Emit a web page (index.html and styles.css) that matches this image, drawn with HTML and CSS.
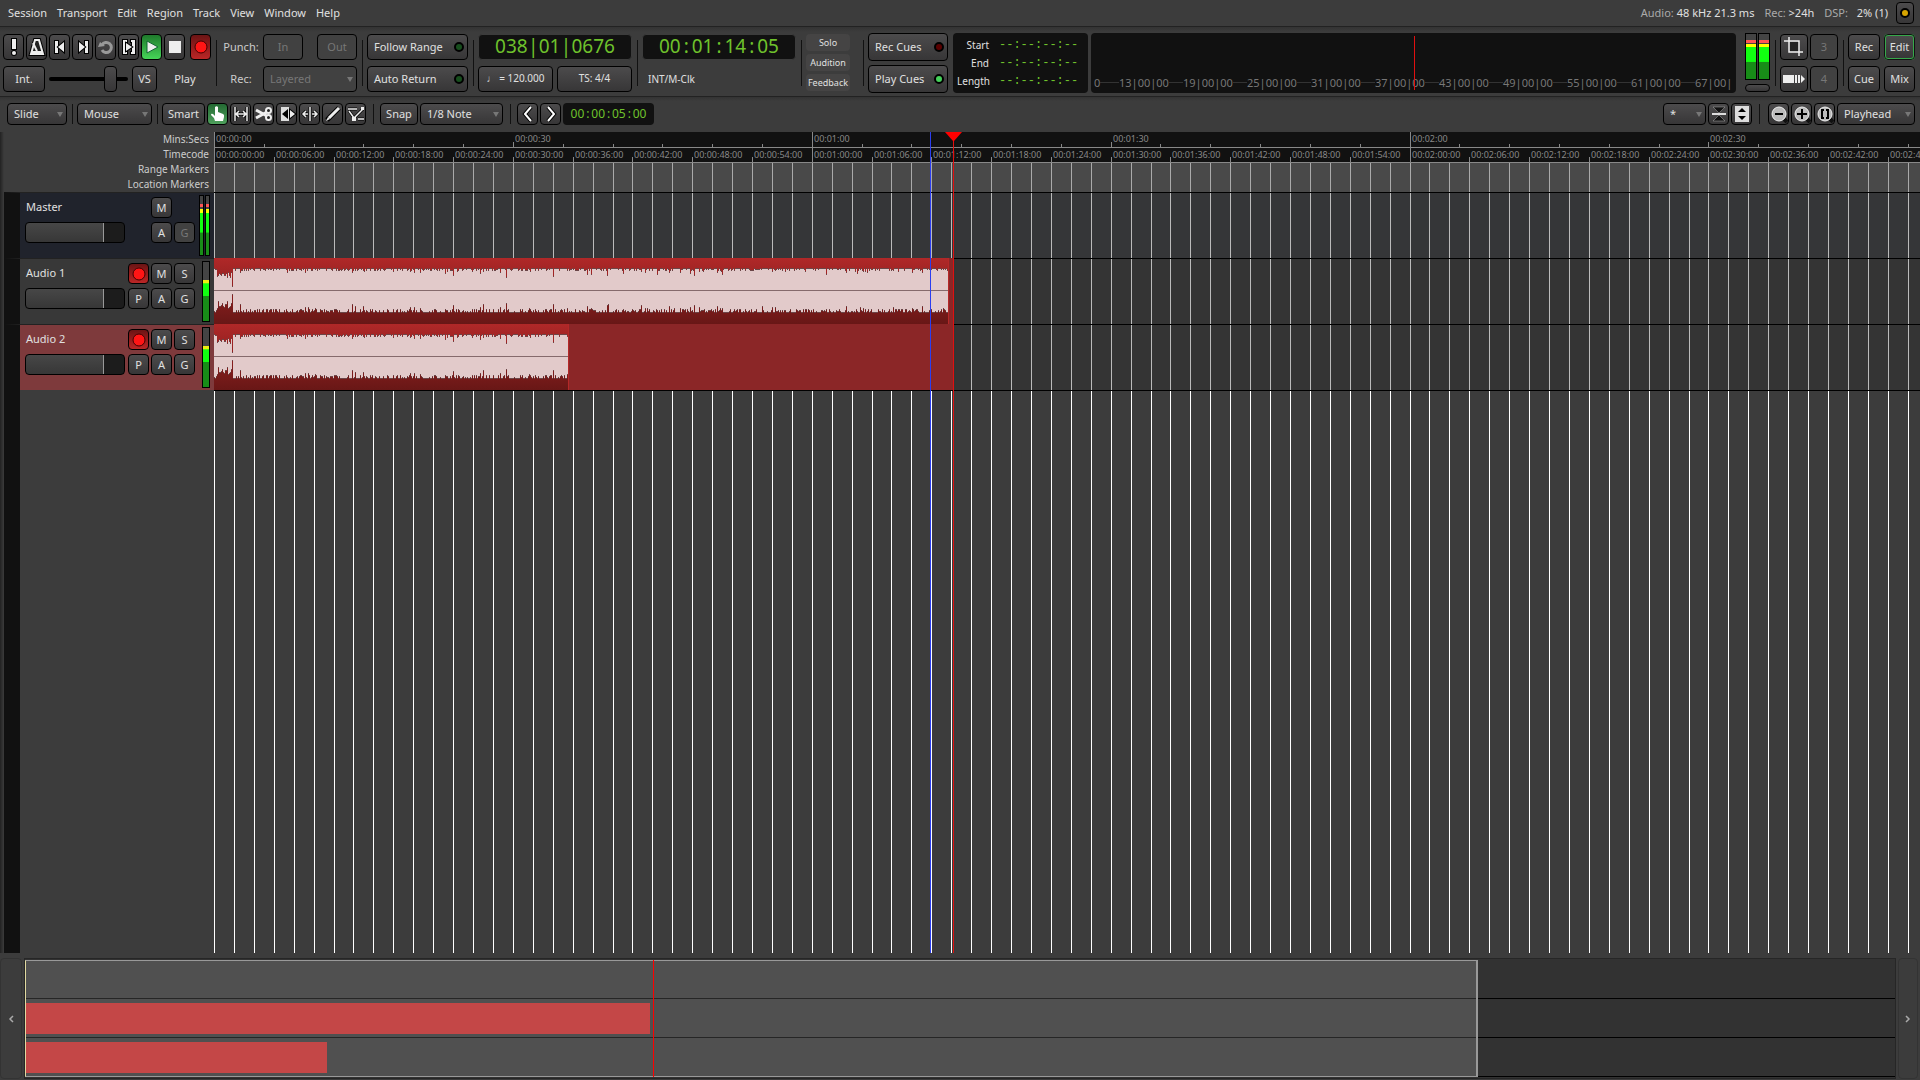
FILE: index.html
```html
<!DOCTYPE html>
<html lang="en">
<head>
    <meta charset="UTF-8">
    <meta name="viewport" content="width=device-width, initial-scale=1.0">
    <title>Session Editor</title>
    <link rel="stylesheet" href="styles.css">
</head>
<body>
    <header class="menubar">
        <nav class="menus">
            <button>Session</button>
            <button>Transport</button>
            <button>Edit</button>
            <button>Region</button>
            <button>Track</button>
            <button>View</button>
            <button>Window</button>
            <button>Help</button>
        </nav>
        <div class="status">
            <span><i>Audio:</i> 48 kHz 21.3 ms</span>
            <span><i>Rec:</i> &gt;24h</span>
            <span class="dsp"><i>DSP:</i> <b>2% (1)</b></span>
            <button class="btn led-btn" aria-label="Feedback state"><span class="led amber"></span></button>
        </div>
    </header>

    <section class="transport">
        <div class="stack">
            <div class="row">
                <button class="btn icon" aria-label="Panic"><svg viewBox="0 0 18 18"><path class="o" d="M7 1h4v10H7z"/><circle class="o" cx="9" cy="15" r="2"/></svg></button>
                <button class="btn icon" aria-label="Metronome"><svg viewBox="0 0 18 18"><path d="M7 2h4l4 14H3z" fill="none" stroke="#000" stroke-width="4"/><path d="M7 2h4l4 14H3z" fill="#222" stroke="#eee" stroke-width="2"/><path d="M4 13h10v3H4z" fill="#eee"/><path d="M9 13L5 5" stroke="#eee" stroke-width="2"/></svg></button>
                <button class="btn icon" aria-label="Go to start"><svg viewBox="0 0 18 18"><path class="o" d="M4 3h3v12H4z"/><path class="o" d="M13 4v10L7 9z"/></svg></button>
                <button class="btn icon" aria-label="Go to end"><svg viewBox="0 0 18 18"><path class="o" d="M11 3h3v12h-3z"/><path class="o" d="M5 4v10l6-5z"/></svg></button>
                <button class="btn icon" aria-label="Loop"><svg viewBox="0 0 18 18"><path d="M5 7a5 5 0 1 1 0 5" fill="none" stroke="#999" stroke-width="3"/><path d="M1 9l2-5 5 4z" fill="#999"/></svg></button>
                <button class="btn icon" aria-label="Play range"><svg viewBox="0 0 18 18"><path class="o" d="M3 2h4v2H6v10h1v2H3zM15 2h-4v2h1v10h-1v2h4z"/><path class="o" d="M6 5v8l6-4z"/></svg></button>
                <button class="btn icon play" aria-label="Play"><svg viewBox="0 0 18 18"><path d="M4 3v12l11-6z" fill="#eee" stroke="#163" /></svg></button>
                <button class="btn icon" aria-label="Stop"><svg viewBox="0 0 18 18"><path d="M3 3h12v12H3z" fill="#eee"/></svg></button>
                <button class="btn icon rec" aria-label="Record"><svg viewBox="0 0 18 18"><circle cx="9" cy="9" r="6" fill="#ff1515" stroke="#400"/></svg></button>
            </div>
            <div class="row">
                <button class="btn w42">Int.</button>
                <input class="shuttle" type="range" min="0" max="100" value="84" aria-label="Shuttle speed">
                <button class="btn w25">VS</button>
                <span class="state">Play</span>
            </div>
        </div>
        <span class="sep"></span>
        <div class="stack punch">
            <div class="row">
                <span class="caption">Punch:</span>
                <button class="btn off w40" disabled>In</button>
                <button class="btn off w40 right" disabled>Out</button>
            </div>
            <div class="row">
                <label class="caption" for="recmode">Rec:</label>
                <span class="drop off"><select id="recmode" disabled><option>Layered</option></select></span>
            </div>
        </div>
        <span class="sep"></span>
        <div class="stack w101">
            <button class="btn wide">Follow Range<span class="led"></span></button>
            <button class="btn wide">Auto Return<span class="led"></span></button>
        </div>
        <span class="sep"></span>
        <div class="stack w154">
            <div class="clock big">038<s>|</s>01<s>|</s>0676</div>
            <div class="row pair">
                <button class="btn small">♩ = 120.000</button>
                <button class="btn small">TS: 4/4</button>
            </div>
        </div>
        <span class="sep"></span>
        <div class="stack w154">
            <div class="clock big">00<s>:</s>01<s>:</s>14<s>:</s>05</div>
            <div class="sync">INT/M-Clk</div>
        </div>
        <span class="sep"></span>
        <div class="alerts">
            <button>Solo</button>
            <button>Audition</button>
            <button>Feedback</button>
        </div>
        <span class="sep"></span>
        <div class="stack cues">
            <button class="btn wide">Rec Cues<span class="led red"></span></button>
            <button class="btn wide">Play Cues<span class="led on"></span></button>
        </div>
        <dl class="selection">
            <dt>Start</dt><dd>--:--:--:--</dd>
            <dt>End</dt><dd>--:--:--:--</dd>
            <dt>Length</dt><dd>--:--:--:--</dd>
        </dl>
        <div class="mini-timeline">
            <div class="mini-labels">
                <span>0</span><span>13|00|00</span><span>19|00|00</span><span>25|00|00</span><span>31|00|00</span><span>37|00|00</span><span>43|00|00</span><span>49|00|00</span><span>55|00|00</span><span>61|00|00</span><span>67|00|</span>
            </div>
            <div class="mini-head"></div>
        </div>
        <div class="out-meter">
            <div class="meter hot"></div>
            <div class="meter hot"></div>
            <button class="btn peak" aria-label="Reset peak"></button>
        </div>
        <span class="sep"></span>
        <div class="scripts">
            <button class="btn" aria-label="Crop"><svg viewBox="0 0 20 20"><path d="M6 5h9v9H6z" fill="#222"/><path d="M5 0v15h14M0 4h15v15" fill="none" stroke="#eee" stroke-width="1.500"/></svg></button>
            <button class="btn off" disabled>3</button>
            <button class="btn" aria-label="Step"><svg viewBox="0 0 22 20"><path d="M0 6h11v8H0zM12 6h2v8h-2zM15 6h2v8h-2zM18 6l4 4-4 4z" fill="#eee"/></svg></button>
            <button class="btn off" disabled>4</button>
        </div>
        <span class="sep"></span>
        <div class="tabs">
            <button class="btn">Rec</button>
            <button class="btn current">Edit</button>
            <button class="btn">Cue</button>
            <button class="btn">Mix</button>
        </div>
    </section>

    <section class="tools">
        <span class="drop w60"><select aria-label="Edit mode"><option>Slide</option></select></span>
        <span class="sep"></span>
        <span class="drop w75"><select aria-label="Edit point"><option>Mouse</option></select></span>
        <span class="sep"></span>
        <div class="row">
            <button class="btn w43">Smart</button>
            <button class="btn icon grab" aria-label="Grab"><svg viewBox="0 0 18 18"><path d="M6 2q1.500-1.500 3 0v5l5 2q1.500.5 1 3l-1 4H6l-1-3-3-3q0-2 2-1l2 2z" fill="#fff"/></svg></button>
            <button class="btn icon" aria-label="Range"><svg viewBox="0 0 18 18"><path d="M3 2v14M15 2v14M4 9h10M7 6L4 9l3 3M11 6l3 3-3 3" fill="none" stroke="#000" stroke-width="3"/><path d="M3 2v14M15 2v14M4 9h10M7 6L4 9l3 3M11 6l3 3-3 3" fill="none" stroke="#eee" stroke-width="1.500"/></svg></button>
            <button class="btn icon" aria-label="Cut"><svg viewBox="0 0 18 18"><path d="M1 5l11 6M1 13l11-6" stroke="#eee" stroke-width="3"/><circle cx="13.500" cy="5.500" r="2.500" fill="#222" stroke="#eee" stroke-width="2"/><circle cx="13.500" cy="12.500" r="2.500" fill="#222" stroke="#eee" stroke-width="2"/></svg></button>
            <button class="btn icon" aria-label="Stretch"><svg viewBox="0 0 18 18"><path d="M3 2h8v14H3z" fill="#ddd"/><path d="M10 4v10L4 9z" fill="#000"/><path class="o" d="M12 5v8l5-4z"/></svg></button>
            <button class="btn icon" aria-label="Timing"><svg viewBox="0 0 18 18"><path d="M9 2v14M2 9h5M11 9h5M5 6L2 9l3 3M13 6l3 3-3 3" fill="none" stroke="#000" stroke-width="3"/><path d="M9 2v14M2 9h5M11 9h5M5 6L2 9l3 3M13 6l3 3-3 3" fill="none" stroke="#eee" stroke-width="1.500"/></svg></button>
            <button class="btn icon" aria-label="Draw"><svg viewBox="0 0 18 18"><path d="M3 15L15 3" stroke="#000" stroke-width="5"/><path d="M5 13L15 3" stroke="#eee" stroke-width="3"/><path d="M2 16l2-4 2 2z" fill="#eee"/></svg></button>
            <button class="btn icon" aria-label="Edit contents"><svg viewBox="0 0 18 18"><path d="M1 4h9M2 6l5 7 9-9M11 14h6" fill="none" stroke="#000" stroke-width="3"/><path d="M1 4h9M2 6l5 7 9-9M11 14h6" fill="none" stroke="#eee" stroke-width="1.500"/><path d="M5 12h4v4H5zM14 2h3v3h-3z" fill="#eee"/></svg></button>
        </div>
        <span class="sep far"></span>
        <div class="row">
            <button class="btn w38">Snap</button>
            <span class="drop w83"><select aria-label="Grid"><option>1/8 Note</option></select></span>
        </div>
        <span class="sep far"></span>
        <div class="row">
            <button class="btn icon" aria-label="Nudge back"><svg viewBox="0 0 18 18"><path d="M12 2L6 9l6 7" fill="none" stroke="#000" stroke-width="4"/><path d="M12 2L6 9l6 7" fill="none" stroke="#fff" stroke-width="2"/></svg></button>
            <button class="btn icon" aria-label="Nudge forward"><svg viewBox="0 0 18 18"><path d="M6 2l6 7-6 7" fill="none" stroke="#000" stroke-width="4"/><path d="M6 2l6 7-6 7" fill="none" stroke="#fff" stroke-width="2"/></svg></button>
            <div class="clock nudge">00<s>:</s>00<s>:</s>05<s>:</s>00</div>
        </div>
        <div class="row zoom">
            <span class="drop w43"><select aria-label="Visible tracks"><option>*</option></select></span>
            <button class="btn icon" aria-label="Shrink tracks"><svg viewBox="0 0 18 18"><path d="M3 2h12L9 8zM3 16h12l-6-6z" fill="#111" stroke="#aaa" stroke-width=".5"/><path d="M2 8h14v2H2z" fill="#ddd"/></svg></button>
            <button class="btn icon" aria-label="Expand tracks"><svg viewBox="0 0 18 18"><path d="M2 1h14v16H2z" fill="#ddd"/><path d="M5 7l4-4 4 4zM5 11l4 4 4-4z" fill="#000"/></svg></button>
            <span class="sep"></span>
            <button class="btn icon" aria-label="Zoom out"><svg viewBox="0 0 18 18"><path d="M13 13l4 4" stroke="#111" stroke-width="4"/><circle cx="9" cy="9" r="7" fill="#bbb" stroke="#eee"/><path d="M5 9h8" stroke="#000" stroke-width="2"/></svg></button>
            <button class="btn icon" aria-label="Zoom in"><svg viewBox="0 0 18 18"><path d="M13 13l4 4" stroke="#111" stroke-width="4"/><circle cx="9" cy="9" r="7" fill="#bbb" stroke="#eee"/><path d="M4 9h10M9 4v10" stroke="#000" stroke-width="2"/></svg></button>
            <button class="btn icon" aria-label="Zoom to session"><svg viewBox="0 0 18 18"><path d="M13 13l4 4" stroke="#111" stroke-width="4"/><circle cx="9" cy="9" r="7" fill="#bbb" stroke="#eee"/><path d="M8 5H6v8h2M10 5h2v8h-2" fill="none" stroke="#000" stroke-width="2"/></svg></button>
            <span class="drop w78"><select aria-label="Zoom focus"><option>Playhead</option></select></span>
        </div>
    </section>

    <main class="editor">
        <div class="side">
            <div class="ruler-names">
                <span>Mins:Secs</span>
                <span>Timecode</span>
                <span>Range Markers</span>
                <span>Location Markers</span>
            </div>
            <div class="track-head master">
                <span class="name">Master</span>
                <input class="fader" type="range" min="0" max="100" value="79" aria-label="Master gain">
                <div class="keys">
                    <span></span><button class="btn">M</button><span></span>
                    <span></span><button class="btn">A</button><button class="btn off" disabled>G</button>
                </div>
                <div class="meters"><div class="meter hot"></div><div class="meter hot"></div></div>
            </div>
            <div class="track-head">
                <span class="name">Audio 1</span>
                <input class="fader" type="range" min="0" max="100" value="79" aria-label="Audio 1 gain">
                <div class="keys">
                    <button class="btn rec" aria-label="Record arm"><svg viewBox="0 0 18 18"><circle cx="9" cy="9" r="6" fill="#ff1515" stroke="#400"/></svg></button><button class="btn">M</button><button class="btn">S</button>
                    <button class="btn">P</button><button class="btn">A</button><button class="btn">G</button>
                </div>
                <div class="meters"><div class="meter mid"></div></div>
            </div>
            <div class="track-head selected">
                <span class="name">Audio 2</span>
                <input class="fader" type="range" min="0" max="100" value="79" aria-label="Audio 2 gain">
                <div class="keys">
                    <button class="btn rec" aria-label="Record arm"><svg viewBox="0 0 18 18"><circle cx="9" cy="9" r="6" fill="#ff1515" stroke="#400"/></svg></button><button class="btn">M</button><button class="btn">S</button>
                    <button class="btn">P</button><button class="btn">A</button><button class="btn">G</button>
                </div>
                <div class="meters"><div class="meter mid"></div></div>
            </div>
        </div>
        <div class="canvas">
            <div class="ruler minsec" id="minsec"></div>
            <div class="ruler timecode" id="timecode"></div>
            <div class="markers"><svg class="grid-lines"></svg></div>
            <div class="lane bus"><svg class="grid-lines"></svg></div>
            <div class="lane">
                <svg class="grid-lines"></svg>
                <div class="recording" data-end="74.2"></div>
                <div class="region" data-end="73.8"><svg class="wave"></svg></div>
            </div>
            <div class="lane">
                <svg class="grid-lines"></svg>
                <div class="recording" data-end="74.2"></div>
                <div class="region" data-end="35.6"><svg class="wave"></svg></div>
            </div>
            <div class="empty"><svg class="grid-lines"></svg></div>
            <div class="edit-cursor" data-time="71.9"></div>
            <div class="playhead" data-time="74.2"><svg viewBox="0 0 17 10"><path d="M0 0h17L9 9H8z" fill="#f00"/></svg></div>
        </div>
    </main>

    <footer class="summary">
        <button class="scroll" aria-label="Scroll left"><svg viewBox="0 0 6 8"><path d="M5 1L2 4l3 3" fill="none" stroke="#aaa" stroke-width="1.500"/></svg></button>
        <div class="overview">
            <div class="strip"></div>
            <div class="strip"><div class="clip" style="width: 33.4%"></div></div>
            <div class="strip"><div class="clip" style="width: 16.1%"></div></div>
            <div class="view" style="width: 77.7%"></div>
            <div class="pos" style="left: 33.6%"></div>
        </div>
        <button class="scroll" aria-label="Scroll right"><svg viewBox="0 0 6 8"><path d="M1 1l3 3-3 3" fill="none" stroke="#aaa" stroke-width="1.500"/></svg></button>
    </footer>

    <script src="editor.js"></script>
</body>
</html>
```
FILE: styles.css
```css
* {
    box-sizing: border-box;
}

body {
    margin: 0;
    height: 100vh;
    display: flex;
    flex-direction: column;
    overflow: hidden;
    background: #3c3c3c;
    color: #e0e0e0;
    font-family: "Noto Sans", sans-serif;
    font-size: 11px;
    line-height: 15px;
}

button, select, input {
    margin: 0;
    padding: 0;
    font: inherit;
    color: inherit;
}

button {
    border: 0;
    background: none;
}

svg {
    display: block;
}

/* shared controls */
.btn {
    position: relative;
    display: flex;
    align-items: center;
    justify-content: center;
    height: 26px;
    border: 1px solid #000;
    border-radius: 4px;
    background: linear-gradient(#4c4b4c, #373637);
    white-space: nowrap;
}

.btn svg {
    width: 18px;
    height: 18px;
}

.btn .o {
    fill: #eee;
    stroke: #000;
    stroke-width: 2px;
    paint-order: stroke;
}

.off, .btn.off {
    background: #414141;
    color: #777;
}

.icon { width: 21px; }
.w25 { width: 25px; }
.w38 { width: 38px; }
.w40 { width: 40px; }
.w42 { width: 42px; }
.w43 { width: 43px; }
.w60 { width: 60px; }
.w75 { width: 75px; }
.w78 { width: 78px; }
.w83 { width: 83px; }
.w101 { width: 101px; }
.w154 { width: 154px; }

.btn.play { background: linear-gradient(#1f7a2c, #46d458); }
.btn.grab { background: linear-gradient(#246a33, #4ea05c); }
.btn.rec { background: linear-gradient(#6b1414, #bb2626); }

.wide {
    justify-content: space-between;
    padding: 0 3px 0 6px;
}

.led {
    width: 10px;
    height: 10px;
    border: 2px solid #000;
    border-radius: 50%;
    background: #174e1d;
}

.led.red { background: #5a0000; }
.led.on { background: #45d15a; }
.led.amber { background: #d6a400; }

.drop {
    position: relative;
    display: block;
    height: 22px;
    border: 1px solid #000;
    border-radius: 4px;
    background: linear-gradient(#4c4b4c, #373637);
}

.drop.off {
    flex: 1;
    height: 26px;
    background: #414141;
}

.drop select {
    width: 100%;
    height: 100%;
    padding-left: 6px;
    border: 0;
    background: none;
    appearance: none;
    opacity: 1;
}

.drop::after {
    content: "";
    position: absolute;
    right: 3px;
    top: 50%;
    margin-top: -2px;
    border: 3px solid transparent;
    border-top: 5px solid #777;
    border-bottom: 0;
    pointer-events: none;
}

.sep {
    width: 1px;
    height: 46px;
    margin-right: -1px;
    background: #111;
}

.row {
    display: flex;
    align-items: center;
    gap: 2px;
}

.stack {
    display: flex;
    flex-direction: column;
    gap: 6px;
}

.clock {
    border-radius: 4px;
    background: #111;
    color: #6fc22c;
    text-align: center;
    white-space: nowrap;
}

.clock s {
    display: inline-block;
    width: 11px;
    text-decoration: none;
}

.clock.big {
    height: 26px;
    border: 1px solid #3c3c3c;
    font-size: 19px;
    line-height: 22px;
}

/* menu bar */
.menubar {
    display: flex;
    justify-content: space-between;
    align-items: center;
    height: 27px;
    padding: 0 6px 1px 8px;
    border-bottom: 1px solid #222;
}

.menus, .status {
    display: flex;
    align-items: center;
    gap: 10px;
}

.status i {
    color: #aaa;
    font-style: normal;
}

.status b {
    margin-left: 6px;
    font-weight: normal;
}

.dsp {
    margin-right: -2px;
}

.led-btn {
    width: 18px;
    height: 22px;
}

/* transport */
.transport {
    display: flex;
    align-items: center;
    gap: 5px;
    height: 70px;
    padding: 2px 5px 0 3px;
    border-bottom: 1px solid #222;
    background: linear-gradient(#333, #3c3c3c 5px);
}

.transport .rec {
    margin-left: 3px;
}

.shuttle {
    width: 83px;
    height: 26px;
    padding: 0 2px;
    background: none;
    appearance: none;
}

.shuttle::-webkit-slider-runnable-track {
    height: 4px;
    border-radius: 2px;
    background: #000;
}

.shuttle::-webkit-slider-thumb {
    width: 13px;
    height: 26px;
    margin-top: -11px;
    border: 1px solid #000;
    border-radius: 4px;
    background: linear-gradient(#4c4b4c, #373637);
    appearance: none;
}

.state {
    flex: 1;
    text-align: center;
}

.punch {
    width: 136px;
}

.caption {
    width: 40px;
    color: #ccc;
    text-align: center;
}

.right {
    margin-left: auto;
}

.pair {
    gap: 4px;
}

.small {
    flex: 1;
    font-size: 10px;
}

.sync {
    height: 26px;
    padding-left: 6px;
    font-size: 10px;
    line-height: 26px;
}

.alerts {
    display: flex;
    flex-direction: column;
    gap: 3px;
    width: 52px;
    padding-right: 8px;
}

.alerts button {
    display: flex;
    justify-content: center;
    height: 17px;
    border-radius: 4px;
    background: #454444;
    font-size: 9px;
    line-height: 17px;
}

.cues {
    gap: 4px;
    width: 80px;
}

.cues .btn {
    height: 28px;
}

.selection {
    display: grid;
    grid-template-columns: 32px 1fr;
    gap: 0 10px;
    align-content: center;
    width: 135px;
    height: 60px;
    margin: 0;
    padding-left: 4px;
    border-radius: 4px;
    background: #111;
    font-size: 10px;
    line-height: 18px;
}

.selection dt {
    text-align: right;
}

.selection dd {
    margin: 0;
    color: #6fc22c;
    font-family: "Liberation Mono", monospace;
    font-size: 12px;
}

.mini-timeline {
    position: relative;
    flex: 1;
    height: 60px;
    min-width: 0;
    margin-left: -2px;
    padding: 0 3px;
    border-radius: 4px;
    background: #111;
}

.mini-labels {
    display: flex;
    height: 60px;
    padding-top: 39px;
    overflow: hidden;
    color: #777;
    white-space: nowrap;
}

.mini-labels span {
    display: flex;
    flex: 0 0 64px;
    align-items: center;
}

.mini-labels span:first-child {
    flex-basis: 25px;
}

.mini-labels span:last-child {
    flex-basis: 34px;
}

.mini-labels span::after {
    content: "";
    flex: 1;
    height: 1px;
    background: #333;
}

.mini-head {
    position: absolute;
    left: 50%;
    top: 3px;
    bottom: 3px;
    width: 1px;
    background: #e01010;
}

.out-meter {
    display: grid;
    grid-template-columns: 12px 12px;
    grid-template-rows: 47px 8px;
    gap: 4px 1px;
    margin: 0 0 0 4px;
}

.peak {
    grid-column: 1 / 3;
    height: 8px;
}

.meter {
    border: 1px solid #000;
}

.meter.hot {
    background: linear-gradient(#444 13%, #f55 13% 19%, #444 19% 22%, #ff0 22% 28%, #1f1 29% 61%, #188c18 63%);
}

.meter.mid {
    background: linear-gradient(#444 30%, #ee1 30% 35%, #1f1 37% 57%, #188c18 58%);
}

.scripts, .tabs {
    display: grid;
    grid-template-columns: 28px 28px;
    gap: 6px 2px;
}

.scripts svg {
    width: 22px;
    height: 20px;
}

.tabs {
    grid-template-columns: 32px 31px;
    gap: 6px 4px;
}

.current {
    border: 2px solid #36a84a;
    outline: 1px solid #111;
    outline-offset: -1px;
}

/* edit tools */
.tools {
    display: flex;
    align-items: center;
    gap: 5px;
    height: 35px;
    padding: 0 5px 2px 7px;
    background: linear-gradient(#333, #3c3c3c 4px);
}

.tools .btn {
    height: 22px;
}

.tools .sep {
    height: 20px;
}

.tools .far {
    margin: 0 1px 0 2px;
}

.nudge {
    width: 91px;
    height: 22px;
    font-size: 12px;
    line-height: 22px;
}

.nudge s {
    width: 7px;
}

.zoom {
    margin-left: auto;
}

.zoom .sep {
    margin: 0 6px 0 5px;
}

/* editor */
.editor {
    display: grid;
    grid-template-columns: 214px 1fr;
    flex: 1;
    min-height: 0;
}

.side {
    display: flex;
    flex-direction: column;
    padding-left: 4px;
    background: linear-gradient(to right, #222, #3c3c3c 4px);
}

.side::after {
    content: "";
    flex: 1;
    width: 16px;
    background: #111;
}

.ruler-names {
    display: flex;
    flex-direction: column;
    height: 60px;
    padding-right: 5px;
    color: #ccc;
    font-size: 10px;
    text-align: right;
}

.track-head {
    display: grid;
    grid-template-columns: 100px 67px 12px;
    grid-template-rows: 21px 21px;
    gap: 4px 3px;
    height: 66px;
    padding: 4px 0 0 5px;
    border-left: 16px solid #111;
    border-top: 1px solid #222;
    background: #383838;
}

.track-head.master {
    background: #20232c;
}

.track-head.selected {
    background: #7e3a3c;
}

.name {
    padding-left: 1px;
    line-height: 19px;
}

.fader {
    grid-row: 2;
    width: 100px;
    height: 21px;
    border: 1px solid #000;
    border-radius: 4px;
    background: linear-gradient(to right, transparent 79%, #1c1c1c 79%), linear-gradient(#474747, #373737);
    appearance: none;
}

.fader::-webkit-slider-thumb {
    width: 1px;
    height: 19px;
    background: #999;
    appearance: none;
}

.keys {
    display: grid;
    grid-template-columns: 21px 21px 21px;
    grid-row: 1 / 3;
    grid-column: 2;
    gap: 4px 2px;
}

.keys .btn {
    height: 21px;
}

.meters {
    display: flex;
    gap: 1px;
    grid-row: 1 / 3;
    grid-column: 3;
    width: 8px;
    height: 61px;
    margin: -2px 0 0 4px;
}

.master .meters {
    width: 11px;
    margin-left: 1px;
}

.meters .meter {
    flex: 1;
}

.canvas {
    position: relative;
    display: flex;
    flex-direction: column;
    min-width: 0;
    overflow: hidden;
}

.ruler {
    position: relative;
    height: 16px;
    overflow: hidden;
    border-bottom: 1px solid #888;
    background: #111;
    color: #888;
    font-size: 9px;
    line-height: 15px;
}

.timecode {
    height: 15px;
    line-height: 13px;
}

.ruler span {
    position: absolute;
    bottom: 0;
    height: 3px;
    border-left: 1px solid #888;
    white-space: nowrap;
}

.ruler .half {
    height: 5px;
}

.ruler .full {
    height: 15px;
}

.ruler b {
    position: absolute;
    bottom: 1px;
    left: 1px;
    font-weight: normal;
}

.markers {
    height: 29px;
    background: #494949;
    color: #aaa;
}

.grid-lines {
    width: 100%;
    height: 100%;
    stroke: currentColor;
    shape-rendering: crispEdges;
}

.lane {
    position: relative;
    height: 66px;
    border-top: 1px solid #000;
    background: #343434;
    color: #bbb;
}

.lane.bus {
    background: #353638;
}

.empty {
    flex: 1;
    min-height: 0;
    border-top: 1px solid #000;
    color: #fff;
}

.recording, .region {
    position: absolute;
    left: 0;
    top: -1px;
    height: 66px;
    background: #8b2627;
}

.region {
    border-right: 1px solid #b52828;
    background: linear-gradient(#b02828, #681716);
}

.wave {
    width: 100%;
    height: 66px;
    shape-rendering: crispEdges;
}

.playhead, .edit-cursor {
    position: absolute;
    top: 0;
    bottom: 0;
    width: 1px;
    background: #e01010;
}

.edit-cursor {
    background: #2b3ef0;
}

.playhead svg {
    width: 17px;
    height: 10px;
    margin-left: -8px;
}

/* summary */
.summary {
    display: flex;
    gap: 2px;
    height: 122px;
    margin-top: 5px;
    padding: 0 2px 1px 0;
}

.scroll {
    display: flex;
    align-items: center;
    justify-content: center;
    width: 22px;
    border: 1px solid #333;
    border-radius: 4px;
}

.scroll:last-child {
    width: 20px;
}

.scroll svg {
    width: 6px;
    height: 8px;
}

.overview {
    position: relative;
    display: flex;
    flex-direction: column;
    flex: 1;
    border: 1px solid #262626;
    padding: 1px 0;
    background: #323232;
}

.strip {
    flex: 1;
    padding: 4px 0 3px 1px;
    border-bottom: 1px solid #000;
}

.clip {
    position: relative;
    z-index: 1;
    height: 100%;
    background: #c44747;
}

.view {
    position: absolute;
    left: 0;
    top: 1px;
    bottom: 1px;
    border: 1px solid #999;
    border-left-color: #e0d9a0;
    border-right-width: 2px;
    background: rgba(255, 255, 255, .15);
}

.pos {
    position: absolute;
    z-index: 2;
    top: 1px;
    bottom: 1px;
    width: 1px;
    background: #f00;
}
```
FILE: editor.js
```js
const PX_PER_SEC = 9.963;
const SVG_NS = "http://www.w3.org/2000/svg";

const canvas = document.querySelector(".canvas");
const width = canvas.clientWidth;

function toX(sec) {
    return Math.round(sec * PX_PER_SEC);
}

function pad(n) {
    return String(n).padStart(2, "0");
}

function timeText(sec) {
    return "00:" + pad(Math.floor(sec / 60)) + ":" + pad(sec % 60);
}

function addTick(ruler, sec, cls, text) {
    const tick = document.createElement("span");
    tick.className = cls;
    tick.style.left = toX(sec) + "px";
    if (text) {
        const label = document.createElement("b");
        label.textContent = text;
        tick.appendChild(label);
    }
    ruler.appendChild(tick);
}

function drawRulers() {
    const minsec = document.getElementById("minsec");
    const timecode = document.getElementById("timecode");
    for (let s = 0; toX(s) < width; s += 5) {
        const cls = s % 60 === 0 ? "full" : s % 30 === 0 ? "half" : "";
        addTick(minsec, s, cls, s % 30 === 0 ? timeText(s) : "");
    }
    for (let s = 0; toX(s) < width; s += 6) {
        addTick(timecode, s, s % 60 === 0 ? "full" : "half", timeText(s) + ":00");
    }
}

function drawGrid() {
    for (const svg of document.querySelectorAll(".grid-lines")) {
        for (let s = 0; toX(s) < width; s += 2) {
            const line = document.createElementNS(SVG_NS, "line");
            line.setAttribute("x1", toX(s) + 0.5);
            line.setAttribute("x2", toX(s) + 0.5);
            line.setAttribute("y1", 0);
            line.setAttribute("y2", "100%");
            svg.appendChild(line);
        }
    }
}

// both takes hold the same material, so the noise is seeded
function makePeaks(count) {
    let seed = 7;
    const rand = () => (seed = (seed * 16807) % 2147483647) / 2147483647;
    const loud = { 239: 7, 266: 5, 292: 9, 339: 8, 373: 6, 393: 7, 476: 5, 480: 7 };
    const peaks = [];
    for (let x = 0; x < count; x++) {
        let top = rand() < 0.5 ? 0 : Math.floor(rand() * 3);
        let low = rand() < 0.4 ? 0 : Math.floor(rand() * 4);
        if (rand() < 0.1) {
            top += Math.floor(rand() * 5);
            low += Math.floor(rand() * 6);
        }
        if (x > 2 && x < 18) {
            top = 3 + Math.floor(rand() * 8);
            low = 4 + Math.floor(rand() * 8);
        }
        if (x === 18) {
            top = 18;
            low = 18;
        }
        if (loud[x]) {
            top = low = loud[x];
        }
        peaks.push([top, low]);
    }
    return peaks;
}

function drawWave(region) {
    const svg = region.querySelector(".wave");
    const count = region.clientWidth;
    const peaks = makePeaks(count);
    let fill = "";
    let fillLow = "";
    let edge = "";
    peaks.forEach(([top, low], x) => {
        fill += (x ? "L" : "M") + x + " " + (10 + top) + "H" + (x + 1);
        fillLow += (x ? "L" : "M") + x + " " + (55 - low) + "H" + (x + 1);
        edge += "M" + x + " " + (10.5 + top) + "h1M" + x + " " + (54.5 - low) + "h1";
    });
    svg.innerHTML = `<path d="${fill}V33H0Z" fill="#e2caca"/><path d="${fillLow}V32H0Z" fill="#e2caca"/>`
        + `<path d="${edge}" stroke="#6b4648"/>`
        + `<path d="M0 32.5H${count}" stroke="#856a6c"/>`;
}

for (const el of document.querySelectorAll("[data-end]")) {
    el.style.width = toX(el.dataset.end) + "px";
}
for (const el of document.querySelectorAll("[data-time]")) {
    el.style.left = toX(el.dataset.time) + "px";
}

drawRulers();
drawGrid();
document.querySelectorAll(".region").forEach(drawWave);
```
